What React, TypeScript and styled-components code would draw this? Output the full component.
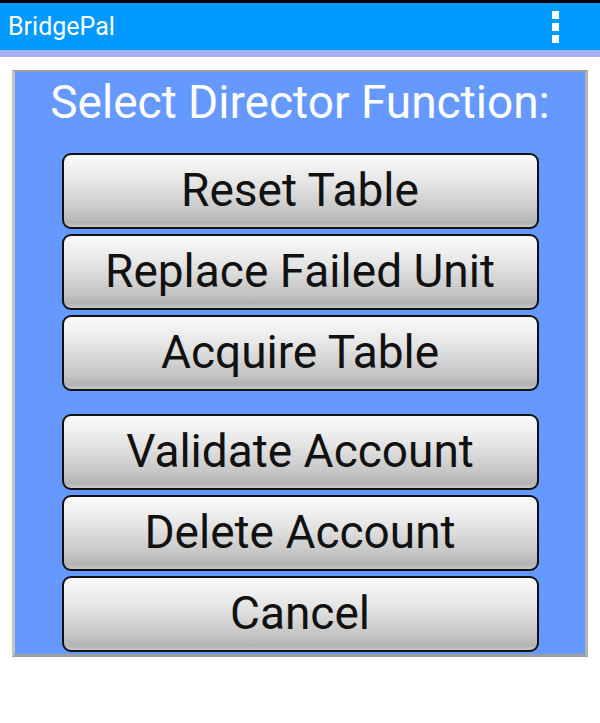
import React from "react";
import styled, { createGlobalStyle } from "styled-components";

const Global = createGlobalStyle`
  html, body { margin: 0; padding: 0; background: #ffffff; }
  body { font-family: Roboto, "Noto Sans", sans-serif; }
`;

const Screen = styled.div`
  width: 600px;
  height: 723px;
  display: flex;
  flex-direction: column;
  background: #ffffff;
  overflow: hidden;
`;

const StatusEdge = styled.div`
  height: 3px;
  background: #000000;
`;

const AppBar = styled.header`
  height: 47px;
  background: #0099ff;
  display: flex;
  align-items: center;
  justify-content: space-between;
  padding: 0 41px 0 8px;
  border-bottom: 7px solid #aab0f6;
`;

const Title = styled.h1`
  margin: 0;
  font-family: Roboto, sans-serif;
  font-weight: 400;
  font-size: 25px;
  color: #ffffff;
`;

const Overflow = styled.div`
  display: flex;
  flex-direction: column;
  gap: 4px;
  margin-top: 1px;
`;

const Dot = styled.span`
  width: 7px;
  height: 8px;
  background: #ffffff;
`;

const Dialog = styled.section`
  margin: 13px 12px 0 12px;
  width: 570px;
  border-top: 2px solid #9e9e9e;
  border-left: 3px solid #c4c4c4;
  border-right: 3px solid #b4b4b4;
  border-bottom: 3px solid #9e9e9e;
  background: #6699ff;
  padding: 0 0 2px 0;
  display: flex;
  flex-direction: column;
  align-items: center;
`;

const Heading = styled.div`
  font-family: Roboto, sans-serif;
  font-size: 46px;
  color: #ffffff;
  line-height: 60px;
  margin-bottom: 21px;
`;

const Group = styled.div<{ $gap?: number }>`
  display: flex;
  flex-direction: column;
  gap: 5px;
  margin-bottom: ${(p) => p.$gap ?? 0}px;
`;

const Button = styled.button`
  width: 477px;
  height: 76px;
  box-sizing: border-box;
  border: 2px solid #111111;
  border-radius: 9px;
  background: linear-gradient(to bottom, #fbfbfb 0%, #e4e4e4 40%, #c4c4c4 80%, #b2b2b2 94%, #c8c8c8 100%);
  font-family: Roboto, sans-serif;
  font-size: 46px;
  color: #111111;
  display: flex;
  align-items: center;
  justify-content: center;
  padding: 0 0 2px 0;
  cursor: pointer;
`;

const first = ["Reset Table", "Replace Failed Unit", "Acquire Table"];
const second = ["Validate Account", "Delete Account", "Cancel"];

export default function App() {
  return (
    <Screen>
      <Global />
      <StatusEdge />
      <AppBar>
        <Title>BridgePal</Title>
        <Overflow>
          <Dot />
          <Dot />
          <Dot />
        </Overflow>
      </AppBar>
      <Dialog>
        <Heading>Select Director Function:</Heading>
        <Group $gap={23}>
          {first.map((t) => (
            <Button key={t}>{t}</Button>
          ))}
        </Group>
        <Group>
          {second.map((t) => (
            <Button key={t}>{t}</Button>
          ))}
        </Group>
      </Dialog>
    </Screen>
  );
}
